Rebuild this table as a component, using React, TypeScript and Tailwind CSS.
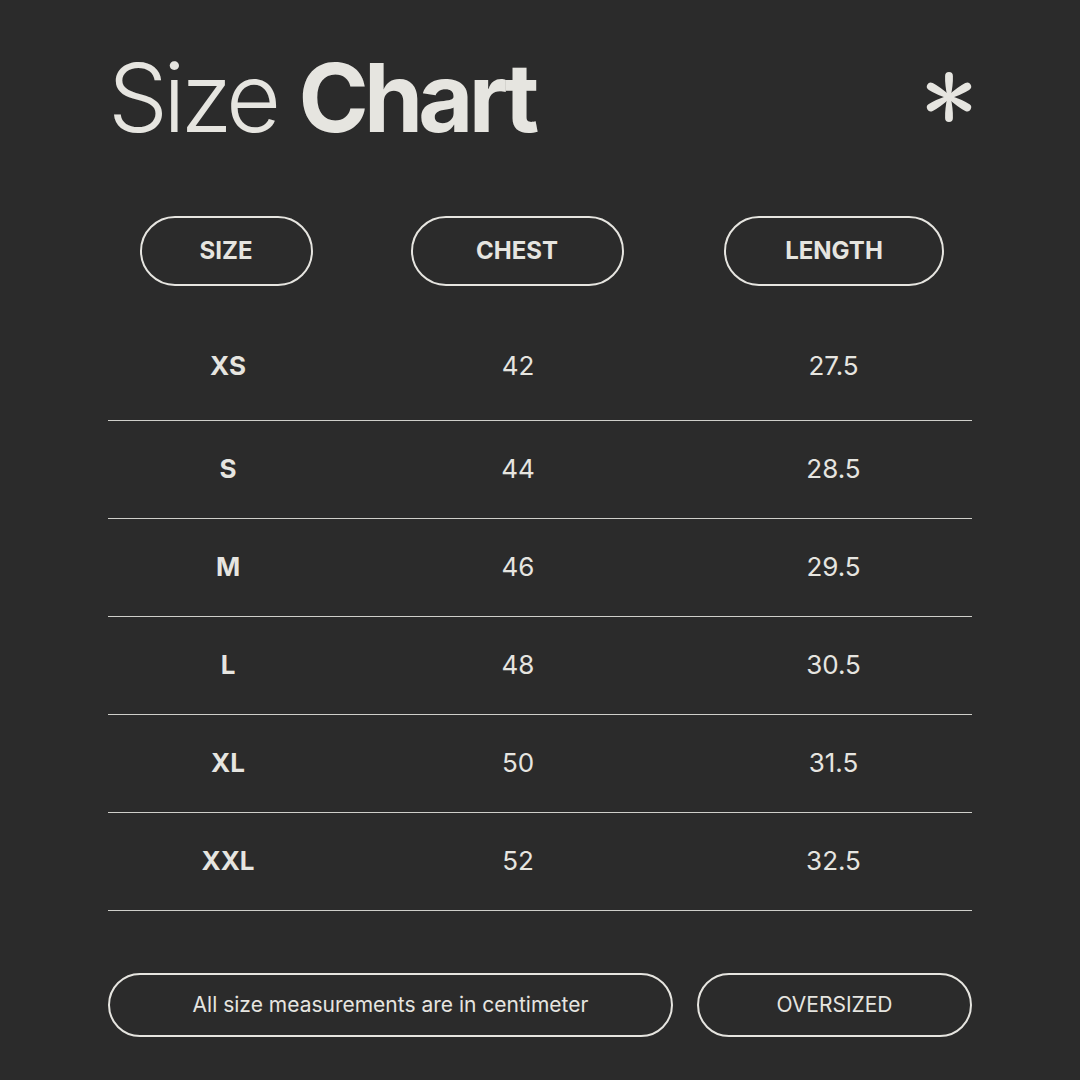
const ROWS = [
  { size: "XS", chest: "42", length: "27.5" },
  { size: "S", chest: "44", length: "28.5" },
  { size: "M", chest: "46", length: "29.5" },
  { size: "L", chest: "48", length: "30.5" },
  { size: "XL", chest: "50", length: "31.5" },
  { size: "XXL", chest: "52", length: "32.5" },
];

// teardrop spoke pointing up from the centre, rotated for the others
const SPOKE = "M -1.6 0 Q -4.2 -12 -3.9 -21 A 3.9 3.9 0 0 1 3.9 -21 Q 4.2 -12 1.6 0 Z";

function Asterisk() {
  return (
    <svg width="48" height="52" viewBox="-24 -26 48 52" className="mt-[21px] -mr-[1px] shrink-0">
      <g fill="#e6e5e0">
        <circle cx="0" cy="0" r="2.6" />
        {[0, 60, 120, 180, 240, 300].map((a) => (
          <path key={a} d={SPOKE} transform={`rotate(${a})`} />
        ))}
      </g>
    </svg>
  );
}

export default function App() {
  return (
    <div className="w-[1080px] h-[1080px] bg-[#2b2b2b] text-[#e6e5e0] px-[108px] pt-[50px] font-['Inter','Noto_Sans',sans-serif] overflow-hidden">
      {/* title */}
      <div className="flex justify-between items-start">
        <h1 className="text-[95px] leading-none tracking-[-0.05em]">
          <span className="font-light">Size </span>
          <span className="font-bold">Chart</span>
        </h1>
        <Asterisk />
      </div>

      {/* column headers */}
      <div className="mt-[71px] grid grid-cols-[236px_346px_1fr]">
        <div className="flex justify-center">
          <div className="w-[173px] h-[70px] rounded-full border-2 border-[#e6e5e0] flex items-center justify-center text-[24px] font-bold">
            SIZE
          </div>
        </div>
        <div className="flex justify-center">
          <div className="w-[213px] h-[70px] rounded-full border-2 border-[#e6e5e0] flex items-center justify-center text-[24px] font-bold">
            CHEST
          </div>
        </div>
        <div className="flex justify-center pl-[6px]">
          <div className="w-[220px] h-[70px] rounded-full border-2 border-[#e6e5e0] flex items-center justify-center text-[24px] font-bold">
            LENGTH
          </div>
        </div>
      </div>

      {/* rows */}
      <div className="mt-[37px]">
        {ROWS.map((row, i) => (
          <div
            key={row.size}
            className={[
              "grid grid-cols-[240px_340px_1fr] items-center h-[98px] border-b border-[#cfcfca] text-[26px]",
              i === 0 ? "pb-[12px]" : "pb-[3px]",
            ].join(" ")}
          >
            <div className="text-center font-bold">{row.size}</div>
            <div className="text-center">{row.chest}</div>
            <div className="text-center pl-[7px]">{row.length}</div>
          </div>
        ))}
      </div>

      {/* footer */}
      <div className="mt-[62px] flex gap-[24px]">
        <div className="w-[565px] h-[64px] rounded-full border-2 border-[#e6e5e0] flex items-center justify-center text-[21px]">
          All size measurements are in centimeter
        </div>
        <div className="flex-1 h-[64px] rounded-full border-2 border-[#e6e5e0] flex items-center justify-center text-[21px]">
          OVERSIZED
        </div>
      </div>
    </div>
  );
}
